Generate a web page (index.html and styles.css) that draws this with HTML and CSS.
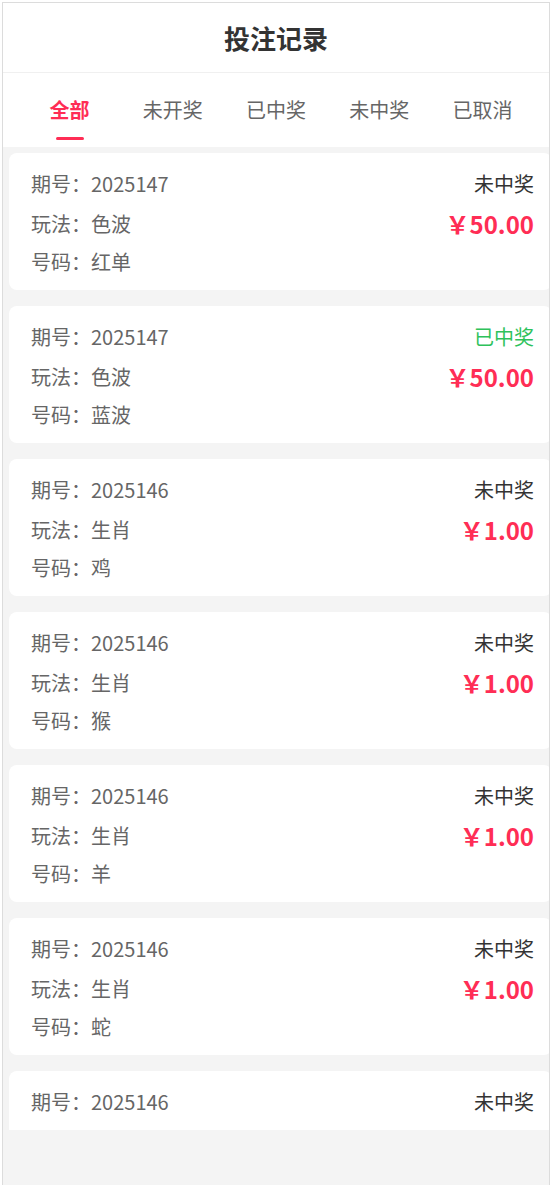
FILE: index.html
```html
<!DOCTYPE html>
<html lang="zh-CN">
<head>
  <meta charset="UTF-8" />
  <meta name="viewport" content="width=device-width, initial-scale=1.0" />
  <title>投注记录</title>
  <link rel="stylesheet" href="styles.css">
</head>
<body>
  <div class="frame">
    <header class="top">
      <h1>投注记录</h1>
    </header>

    <nav class="tabs">
      <div class="tab active"><span>全部</span><i class="bar"></i></div>
      <div class="tab"><span>未开奖</span></div>
      <div class="tab"><span>已中奖</span></div>
      <div class="tab"><span>未中奖</span></div>
      <div class="tab"><span>已取消</span></div>
    </nav>

    <div class="list">
      <div class="card">
        <div class="row r1"><span class="info">期号：2025147</span><span class="status">未中奖</span></div>
        <div class="row r2"><span class="info">玩法：色波</span><span class="amount">￥50.00</span></div>
        <div class="row r3"><span class="info">号码：红单</span></div>
      </div>

      <div class="card">
        <div class="row r1"><span class="info">期号：2025147</span><span class="status won">已中奖</span></div>
        <div class="row r2"><span class="info">玩法：色波</span><span class="amount">￥50.00</span></div>
        <div class="row r3"><span class="info">号码：蓝波</span></div>
      </div>

      <div class="card">
        <div class="row r1"><span class="info">期号：2025146</span><span class="status">未中奖</span></div>
        <div class="row r2"><span class="info">玩法：生肖</span><span class="amount">￥1.00</span></div>
        <div class="row r3"><span class="info">号码：鸡</span></div>
      </div>

      <div class="card">
        <div class="row r1"><span class="info">期号：2025146</span><span class="status">未中奖</span></div>
        <div class="row r2"><span class="info">玩法：生肖</span><span class="amount">￥1.00</span></div>
        <div class="row r3"><span class="info">号码：猴</span></div>
      </div>

      <div class="card">
        <div class="row r1"><span class="info">期号：2025146</span><span class="status">未中奖</span></div>
        <div class="row r2"><span class="info">玩法：生肖</span><span class="amount">￥1.00</span></div>
        <div class="row r3"><span class="info">号码：羊</span></div>
      </div>

      <div class="card">
        <div class="row r1"><span class="info">期号：2025146</span><span class="status">未中奖</span></div>
        <div class="row r2"><span class="info">玩法：生肖</span><span class="amount">￥1.00</span></div>
        <div class="row r3"><span class="info">号码：蛇</span></div>
      </div>

      <div class="card cut">
        <div class="row r1"><span class="info">期号：2025146</span><span class="status">未中奖</span></div>
      </div>
    </div>
  </div>
</body>
</html>
```

FILE: styles.css
```css
body {
  margin: 0;
  font-family: "Noto Sans CJK SC", "Noto Sans", sans-serif;
  background: #fff;
  color: #333;
}
.frame {
  box-sizing: border-box;
  margin: 2px 0 0 2px;
  width: 548px;
  height: 1200px;
  border: 1px solid #dcdcdc;
  background: #f4f4f4;
  overflow: hidden;
}
.top {
  height: 69px;
  background: #fff;
  border-bottom: 1px solid #f0f0f0;
  text-align: center;
}
.top h1 {
  margin: 0;
  font-size: 26px;
  line-height: 69px;
  font-weight: 700;
  color: #333;
}
.tabs {
  height: 74px;
  padding: 0 15px;
  background: #fff;
  display: grid;
  grid-template-columns: repeat(5, 1fr);
}
.tab {
  display: flex;
  flex-direction: column;
  align-items: center;
  padding-top: 23px;
  font-size: 20px;
  line-height: 28px;
  color: #666;
}
.tab.active {
  color: #ff2d55;
  font-weight: 700;
}
.bar {
  display: block;
  width: 28px;
  height: 3px;
  margin-top: 13px;
  border-radius: 2px;
  background: #ff2d55;
}
.list {
  padding: 6px 0 0 6px;
}
.card {
  margin: 0 -3px 16px 0;
  padding: 17px 18px 16px 22px;
  background: #fff;
  border-radius: 8px;
}
.card.cut {
  padding-bottom: 16px;
  border-radius: 8px 8px 0 0;
}
.row {
  display: flex;
  justify-content: space-between;
  align-items: center;
  font-size: 20px;
}
.r1 {
  height: 26px;
}
.r2 {
  height: 30px;
  margin-top: 12px;
}
.r3 {
  height: 26px;
  margin-top: 10px;
}
.info {
  color: #666;
}
.status {
  color: #333;
}
.status.won {
  color: #2ec25b;
}
.amount {
  font-size: 24px;
  font-weight: 700;
  color: #ff2d55;
}
```
